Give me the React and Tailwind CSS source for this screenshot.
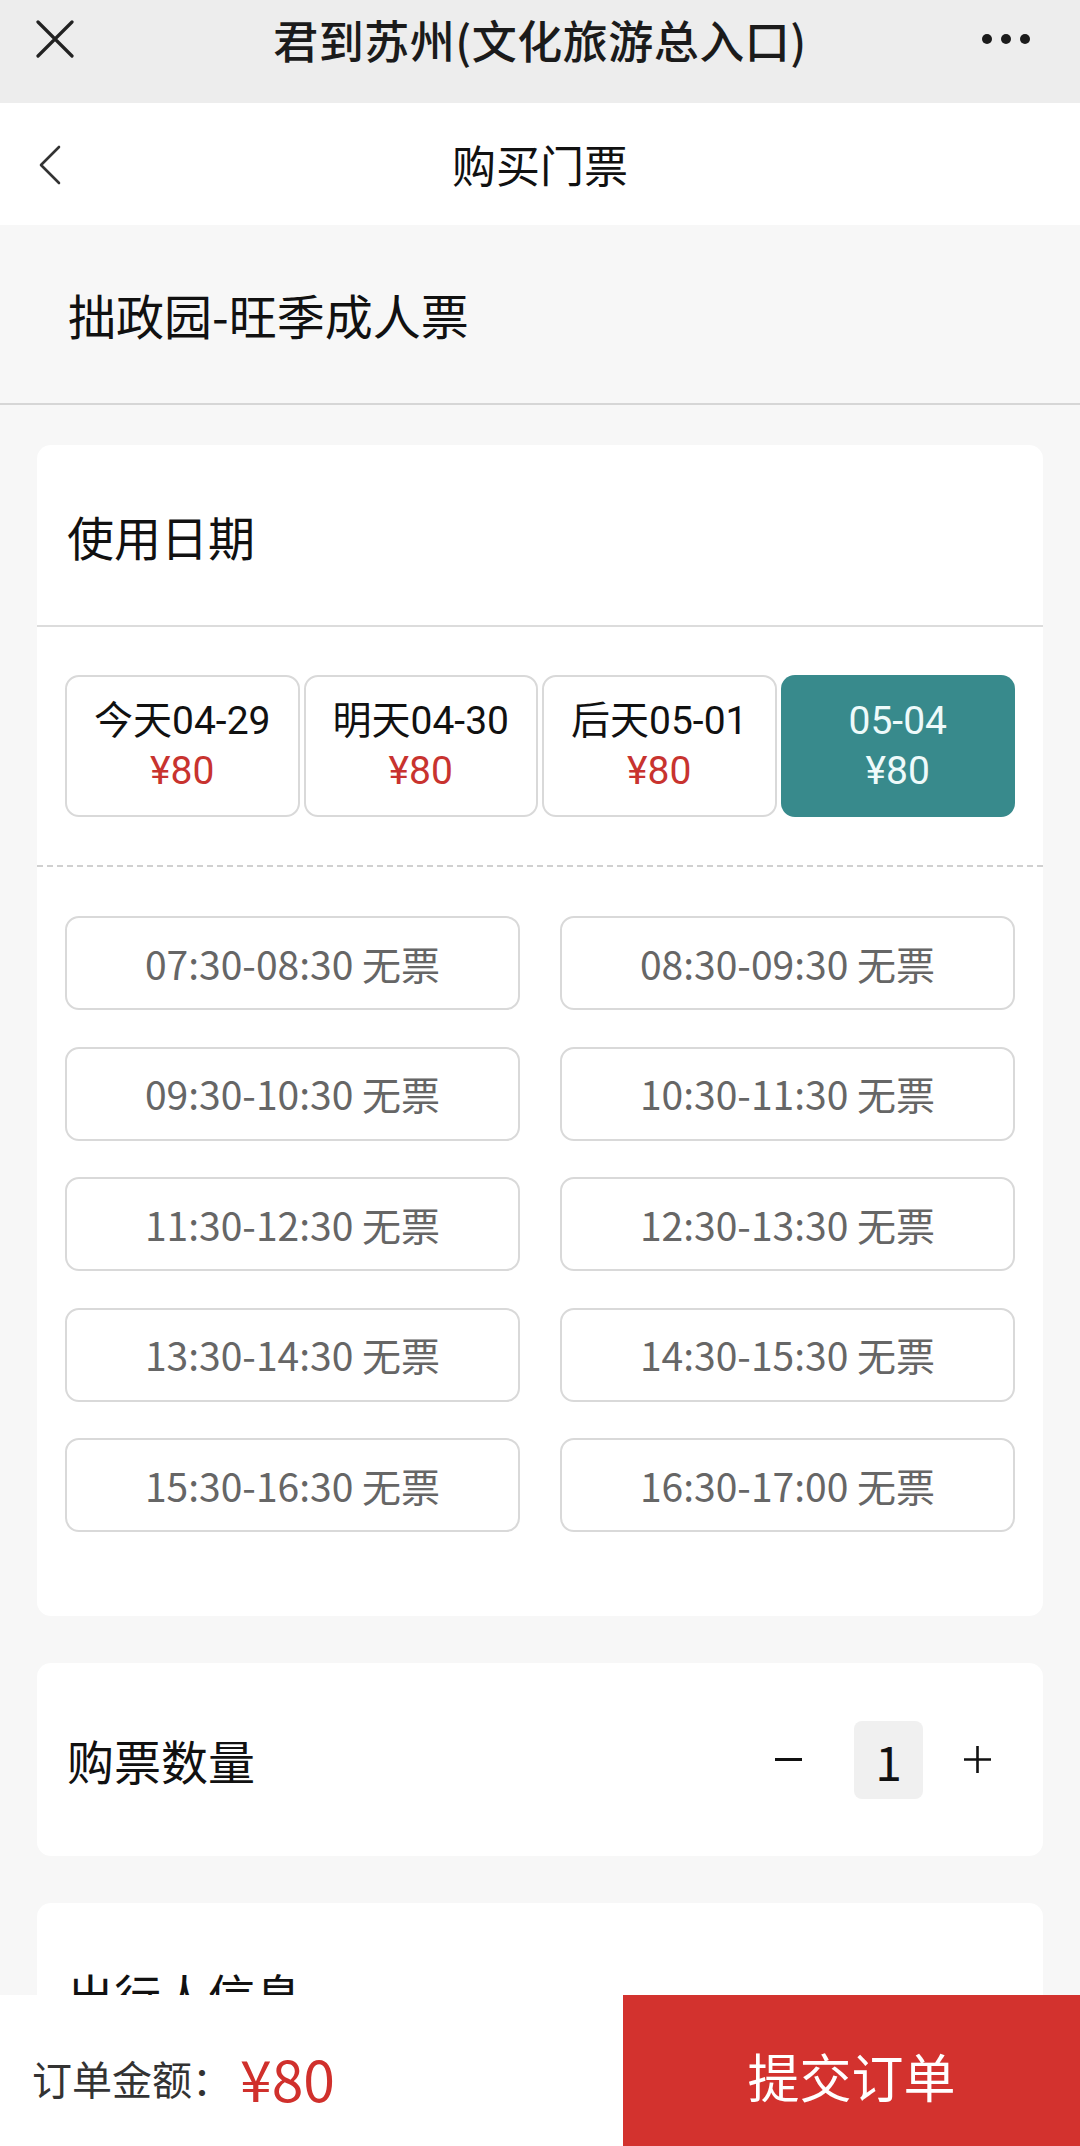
const dates = [
  { label: "今天04-29", price: "¥80" },
  { label: "明天04-30", price: "¥80" },
  { label: "后天05-01", price: "¥80" },
  { label: "05-04", price: "¥80", selected: true },
];

const slots = [
  "07:30-08:30",
  "08:30-09:30",
  "09:30-10:30",
  "10:30-11:30",
  "11:30-12:30",
  "12:30-13:30",
  "13:30-14:30",
  "14:30-15:30",
  "15:30-16:30",
  "16:30-17:00",
];

function TopBar() {
  return (
    <div className="h-[103px] bg-[#ededed]">
      <div className="h-[78px] flex items-center px-[36px]">
        <div className="w-[90px]">
          <svg width="38" height="38" viewBox="0 0 38 38" className="text-[#222]">
            <path d="M2 2 L36 36 M36 2 L2 36" stroke="currentColor" strokeWidth="3.2" strokeLinecap="round" />
          </svg>
        </div>
        <div className="flex-1 text-center text-[45px] font-medium tracking-[0.5px] text-[#1b1b1b] leading-none">
          君到苏州(文化旅游总入口)
        </div>
        <div className="w-[90px] flex items-center justify-end gap-[9px] pr-[14px]">
          <span className="w-[10px] h-[10px] rounded-full bg-[#1b1b1b]"></span>
          <span className="w-[10px] h-[10px] rounded-full bg-[#1b1b1b]"></span>
          <span className="w-[10px] h-[10px] rounded-full bg-[#1b1b1b]"></span>
        </div>
      </div>
    </div>
  );
}

function NavBar() {
  return (
    <div className="relative h-[122px] bg-white flex items-center justify-center">
      {/* back chevron */}
      <svg width="24" height="40" viewBox="0 0 24 40" className="absolute left-[38px] top-[42px] text-[#333]">
        <path d="M21 2 L3 20 L21 38" fill="none" stroke="currentColor" strokeWidth="2.6" strokeLinecap="round" strokeLinejoin="round" />
      </svg>
      <div className="text-[44px] text-[#111] leading-none">购买门票</div>
    </div>
  );
}

function DateButton({ label, price, selected }) {
  return (
    <div
      className={
        selected
          ? "h-[142px] rounded-[14px] bg-[#388a8c] flex flex-col items-center justify-center font-['Roboto','Noto_Sans_CJK_SC',sans-serif]"
          : "h-[142px] rounded-[14px] border-2 border-[#d9d9d9] bg-white flex flex-col items-center justify-center font-['Roboto','Noto_Sans_CJK_SC',sans-serif]"
      }
    >
      <div className={selected ? "text-[39px] leading-[50px] text-[#eefafa]" : "text-[39px] leading-[50px] text-[#111]"}>
        {label}
      </div>
      <div className={selected ? "text-[39px] leading-[50px] text-[#eefafa]" : "text-[39px] leading-[50px] text-[#c8332f]"}>
        {price}
      </div>
    </div>
  );
}

export default function App() {
  return (
    <div className="relative w-[1080px] h-[2146px] overflow-hidden bg-[#f7f7f7] font-['Noto_Sans_CJK_SC','Noto_Sans',sans-serif]">
      <TopBar />
      <NavBar />

      {/* product name */}
      <div className="h-[180px] flex items-center px-[68px] border-b-2 border-[#d6d6d6]">
        <div className="text-[48px] text-[#111] leading-none">拙政园-旺季成人票</div>
      </div>

      <div className="px-[37px] pt-[40px] flex flex-col gap-[47px]">
        {/* use date */}
        <div className="bg-white rounded-[14px]">
          <div className="h-[182px] flex items-center px-[30px] border-b-2 border-[#dcdcdc]">
            <div className="text-[47px] text-[#111] leading-none">使用日期</div>
          </div>

          <div className="px-[28px] pt-[48px] pb-[48px] grid grid-cols-4 gap-[4px] border-b-2 border-dashed border-[#d0d0d0]">
            {dates.map((d) => (
              <DateButton key={d.label} {...d} />
            ))}
          </div>

          <div className="px-[28px] pt-[49px] pb-[84px] grid grid-cols-2 gap-x-[40px] gap-y-[36.5px]">
            {slots.map((s) => (
              <div
                key={s}
                className="h-[94px] rounded-[14px] border-2 border-[#d9d9d9] flex items-center justify-center text-[39px] text-[#666] leading-none"
              >
                {s} 无票
              </div>
            ))}
          </div>
        </div>

        {/* quantity */}
        <div className="h-[193px] bg-white rounded-[14px] flex items-center justify-between pl-[30px] pr-[51px]">
          <div className="text-[47px] text-[#111] leading-none">购票数量</div>
          <div className="flex items-center">
            <div className="w-[27px] h-[3px] bg-[#111]"></div>
            <div className="ml-[52px] w-[69px] h-[78px] rounded-[8px] bg-[#f0f0f0] flex items-center justify-center text-[48px] text-[#111] leading-none">
              1
            </div>
            <svg width="29" height="29" viewBox="0 0 29 29" className="ml-[40px] text-[#111]">
              <path d="M14.5 1 V28 M1 14.5 H28" stroke="currentColor" strokeWidth="2.6" />
            </svg>
          </div>
        </div>

        {/* traveller info */}
        <div className="bg-white rounded-[14px] h-[400px]">
          <div className="h-[181px] flex items-center px-[30px]">
            <div className="text-[47px] text-[#111] leading-none">出行人信息</div>
          </div>
        </div>
      </div>

      {/* bottom bar */}
      <div className="absolute left-0 right-0 bottom-0 h-[151px] bg-white flex">
        <div className="flex-1 flex items-center pl-[32px] pt-[14px]">
          <span className="text-[40px] text-[#333] leading-none">订单金额：</span>
          <span className="ml-[8px] text-[57px] text-[#d0302c] leading-none">¥80</span>
        </div>
        <div className="w-[457px] bg-[#d3322e] flex items-center justify-center pt-[10px]">
          <span className="text-[52px] text-white leading-none">提交订单</span>
        </div>
      </div>
    </div>
  );
}
